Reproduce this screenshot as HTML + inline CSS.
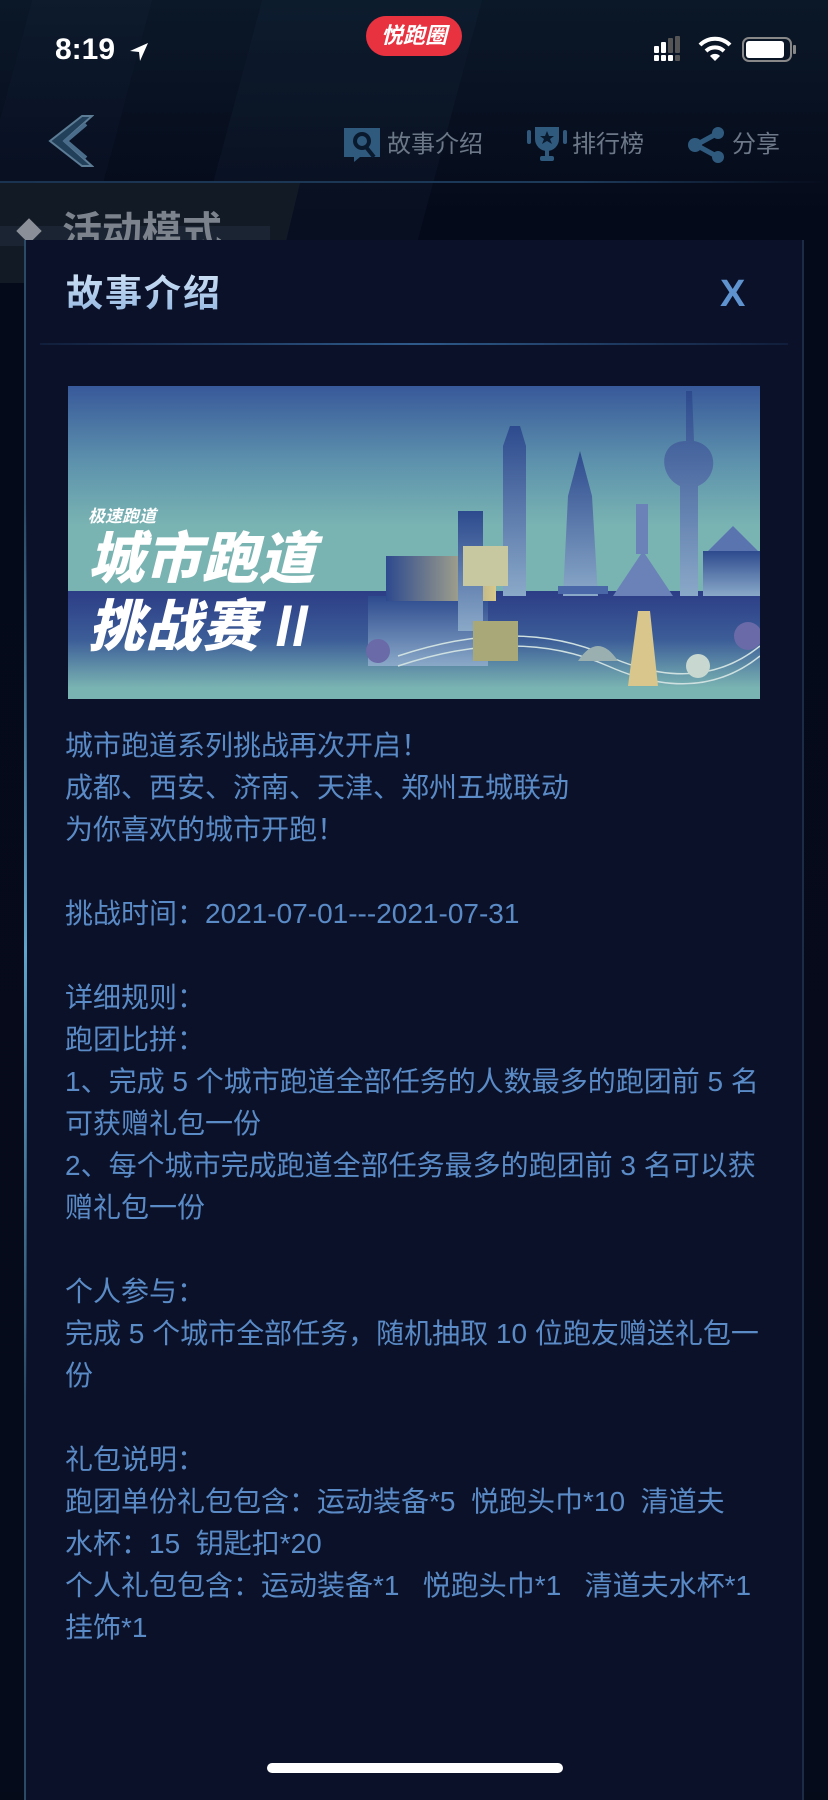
<!DOCTYPE html>
<html><head><meta charset="utf-8"><style>
*{margin:0;padding:0;box-sizing:border-box}
html,body{width:828px;height:1792px;overflow:hidden;background:#060b1a;font-family:"Liberation Sans","Noto Sans CJK SC",sans-serif}
.abs{position:absolute}
#bg{position:absolute;left:0;top:0;width:828px;height:1792px;background:linear-gradient(180deg,#0b1828 0%,#050a1a 12%,#060b1c 100%)}
.stripe{position:absolute;top:0;height:240px;background:rgba(40,70,100,0.10);transform:skewX(-15deg)}
.tab{position:absolute;top:129px;font-size:24px;color:#6c7888;line-height:32px}
.body{position:absolute;left:65px;top:725px;font-size:28px;line-height:42px;color:#5a8bc6;white-space:nowrap}
</style></head><body>
<div id="bg"></div>
<div class="stripe" style="left:230px;width:220px"></div>
<div class="stripe" style="left:0;width:120px;background:rgba(40,70,100,0.08)"></div>
<!-- status bar -->
<div class="abs" style="left:55px;top:33px;font-size:30px;color:#fff;font-weight:600">8:19</div>
<svg class="abs" style="left:128px;top:41px" width="22" height="22" viewBox="0 0 22 22"><path d="M20 2 L2 10 L11 11 L12 20 Z" fill="#fff"/></svg>
<div class="abs" style="left:366px;top:16px;width:96px;height:40px;border-radius:20px;background:#e8323f;color:#fff;font-size:22px;font-weight:bold;font-style:italic;text-align:center;line-height:40px">悦跑圈</div>
<svg class="abs" style="left:654px;top:36px" width="36" height="26"><rect x="0" y="10" width="5" height="7" rx="1" fill="#fff"/><rect x="7" y="6" width="5" height="11" rx="1" fill="#fff"/><rect x="14" y="2" width="5" height="15" rx="1" fill="#555"/><rect x="21" y="0" width="5" height="17" rx="1" fill="#555"/><rect x="0" y="19" width="5" height="6" rx="1" fill="#fff"/><rect x="7" y="19" width="5" height="6" rx="1" fill="#fff"/><rect x="14" y="19" width="5" height="6" rx="1" fill="#fff"/><rect x="21" y="19" width="5" height="6" rx="1" fill="#555"/></svg>
<svg class="abs" style="left:698px;top:36px" width="34" height="26" viewBox="0 0 34 26"><path d="M2 9 A21 21 0 0 1 32 9" stroke="#fff" stroke-width="4" fill="none"/><path d="M8 15 A13 13 0 0 1 26 15" stroke="#fff" stroke-width="4" fill="none"/><path d="M12 20 L17 25 L22 20 A7 7 0 0 0 12 20Z" fill="#fff"/></svg>
<div class="abs" style="left:742px;top:37px;width:50px;height:25px;border:2px solid #888;border-radius:7px"></div>
<div class="abs" style="left:746px;top:41px;width:38px;height:17px;background:#fff;border-radius:3px"></div>
<div class="abs" style="left:793px;top:45px;width:3px;height:9px;background:#888;border-radius:1px"></div>
<!-- nav -->
<svg class="abs" style="left:42px;top:114px" width="52" height="54" viewBox="0 0 52 54"><path d="M40 2 L8 27 L40 52 L50 52 L22 27 L50 2 Z" fill="#23405a" stroke="#5c7b95" stroke-width="2"/><path d="M44 10 L24 27 L44 44" stroke="#4a6d8c" stroke-width="4" fill="none"/></svg>
<svg class="abs" style="left:344px;top:127px" width="36" height="36" viewBox="0 0 36 36"><rect x="0" y="1" width="36" height="29" fill="#2f5a7e"/><circle cx="18" cy="14" r="9" fill="#0a1a2e"/><circle cx="18" cy="14" r="5" fill="#2f5a7e"/><path d="M22 20 L30 30" stroke="#0a1a2e" stroke-width="4"/><path d="M10 30 L16 30 L10 35Z" fill="#2f5a7e"/></svg>
<div class="tab" style="left:387px">故事介绍</div>
<svg class="abs" style="left:527px;top:127px" width="40" height="36" viewBox="0 0 40 36"><rect x="0" y="3" width="4" height="14" rx="2" fill="#2f5a7e"/><rect x="36" y="3" width="4" height="14" rx="2" fill="#2f5a7e"/><path d="M8 0 H32 V12 A12 12 0 0 1 8 12Z" fill="#2f5a7e"/><rect x="18" y="22" width="4" height="8" fill="#2f5a7e"/><rect x="13" y="29" width="14" height="5" rx="2" fill="#2f5a7e"/><path d="M20 4 L22 9 L27 9 L23 12 L25 17 L20 14 L15 17 L17 12 L13 9 L18 9Z" fill="#0a1a2e"/></svg>
<div class="tab" style="left:572px">排行榜</div>
<svg class="abs" style="left:688px;top:127px" width="38" height="36" viewBox="0 0 38 36"><path d="M30 6 L8 18 L30 30" stroke="#2f5a7e" stroke-width="5" fill="none"/><circle cx="30" cy="6" r="6" fill="#2f5a7e"/><circle cx="7" cy="18" r="7" fill="#2f5a7e"/><circle cx="30" cy="30" r="6" fill="#2f5a7e"/></svg>
<div class="tab" style="left:732px">分享</div>
<div class="abs" style="left:0;top:181px;width:828px;height:2px;background:linear-gradient(90deg,#1a3350,#1d3a5a 70%,rgba(30,60,90,0))"></div>
<!-- behind band -->
<div class="abs" style="left:0;top:183px;width:300px;height:100px;background:linear-gradient(90deg,#121a26,#121a26);clip-path:polygon(0 0,100% 0,92% 100%,0 100%)"></div>
<div class="abs" style="left:0;top:226px;width:270px;height:20px;background:rgba(60,80,100,0.2)"></div>
<div class="abs" style="left:20px;top:222px;width:18px;height:18px;background:#8a8f98;transform:rotate(45deg)"></div>
<div class="abs" style="left:62px;top:208px;font-size:40px;font-weight:bold;color:#7d838c;line-height:48px">活动模式</div>
<!-- modal -->
<div class="abs" style="left:24px;top:240px;width:780px;height:1560px;background:#0b1129;border-left:2px solid #2a4a66;border-right:2px solid #1c2c44"></div>
<div class="abs" style="left:24px;top:500px;width:3px;height:900px;background:linear-gradient(180deg,rgba(80,150,200,0),#5ea6cc 50%,rgba(80,150,200,0))"></div>
<div class="abs" style="left:66px;top:270px;font-size:37px;line-height:48px;letter-spacing:2px;font-weight:bold;background:linear-gradient(180deg,#d2e4f6,#8fb4e0);-webkit-background-clip:text;color:transparent">故事介绍</div>
<div class="abs" style="left:720px;top:270px;font-size:38px;line-height:48px;font-weight:bold;color:#5f93d0">X</div>
<div class="abs" style="left:40px;top:343px;width:748px;height:2px;background:linear-gradient(90deg,rgba(40,80,130,0.2),#2e5a8a 50%,rgba(40,80,130,0.2))"></div>
<!-- banner -->
<div class="abs" style="left:68px;top:386px;width:692px;height:313px;overflow:hidden;background:linear-gradient(180deg,#38599a 0%,#5e93ad 25%,#7ab4b2 45%,#7ab4b2 100%)">
 <div class="abs" style="left:0;top:205px;width:692px;height:108px;background:linear-gradient(180deg,#2c3d86 0%,#3c5d98 45%,#7ab4b2 90%)"></div>
 <div class="abs" style="left:20px;top:116px;font-size:17px;color:#fff;font-weight:bold;font-style:italic">极速跑道</div>
 <div class="abs" style="left:20px;top:140px;font-size:56px;font-weight:900;font-style:italic;color:#fff;line-height:66px;letter-spacing:1px">城市跑道</div>
 <div class="abs" style="left:20px;top:208px;font-size:56px;font-weight:900;font-style:italic;color:#fff;line-height:66px;letter-spacing:1px">挑战赛 ll</div>
 <svg class="abs" style="left:290px;top:0" width="402" height="313" viewBox="0 0 402 313">
  <defs><linearGradient id="b" x1="0" y1="0" x2="0" y2="1"><stop offset="0" stop-color="#2d4a8e"/><stop offset="1" stop-color="#8aa9c8"/></linearGradient><linearGradient id="g" x1="0" y1="0" x2="1" y2="0"><stop offset="0" stop-color="#2d4a8e"/><stop offset="1" stop-color="#d8c98a"/></linearGradient></defs>
  <rect x="10" y="210" width="120" height="70" fill="url(#b)"/>
  <rect x="28" y="170" width="110" height="45" fill="url(#g)"/>
  <rect x="100" y="125" width="25" height="120" fill="url(#b)"/>
  <path d="M145 210 V60 L152 40 L162 40 L168 60 V210Z" fill="url(#b)"/>
  <rect x="105" y="160" width="45" height="40" fill="#c8c8a0"/>
  <path d="M205 210 L210 110 L222 65 L234 110 L240 210Z" fill="url(#b)"/>
  <rect x="200" y="200" width="50" height="8" fill="#4a68a8"/>
  <path d="M255 210 L285 165 L315 210Z" fill="#6a82b8"/>
  <rect x="278" y="118" width="12" height="50" fill="#6a82b8"/>
  <path d="M322 210 V100 C300 90 300 55 328 55 L328 5 L334 5 L336 55 C362 60 360 92 340 100 V210Z" fill="url(#b)"/>
  <rect x="345" y="165" width="60" height="45" fill="url(#b)"/>
  <path d="M350 165 L375 140 L400 165Z" fill="#5a74b0"/>
  <path d="M40 270 Q160 230 250 270 T402 260" stroke="#cfe0e0" stroke-width="1.5" fill="none"/>
  <path d="M40 280 Q160 240 250 280 T402 270" stroke="#cfe0e0" stroke-width="1.5" fill="none"/>
  <rect x="115" y="235" width="45" height="40" fill="#a8a878"/>
  <path d="M220 275 Q240 245 260 275Z" fill="#9ab0b0"/>
  <path d="M270 300 L280 225 L292 225 L300 300Z" fill="#d8c68c"/>
  <circle cx="340" cy="280" r="12" fill="#c8d8d0"/>
  <circle cx="390" cy="250" r="14" fill="#6a6aa8"/>
  <circle cx="20" cy="265" r="12" fill="#6a6aa8"/>
 </svg>
</div>
<!-- body text -->
<div class="body">城市跑道系列挑战再次开启！<br>成都、西安、济南、天津、郑州五城联动<br>为你喜欢的城市开跑！<br><br>挑战时间：2021-07-01---2021-07-31<br><br>详细规则：<br>跑团比拼：<br>1、完成 5 个城市跑道全部任务的人数最多的跑团前 5 名<br>可获赠礼包一份<br>2、每个城市完成跑道全部任务最多的跑团前 3 名可以获<br>赠礼包一份<br><br>个人参与：<br>完成 5 个城市全部任务，随机抽取 10 位跑友赠送礼包一<br>份<br><br>礼包说明：<br>跑团单份礼包包含：运动装备*5&nbsp; 悦跑头巾*10&nbsp; 清道夫<br>水杯：15&nbsp; 钥匙扣*20<br>个人礼包包含：运动装备*1&nbsp;&nbsp; 悦跑头巾*1&nbsp;&nbsp; 清道夫水杯*1<br>挂饰*1</div>
<div class="abs" style="left:267px;top:1763px;width:296px;height:10px;border-radius:5px;background:#fff"></div>
</body></html>
